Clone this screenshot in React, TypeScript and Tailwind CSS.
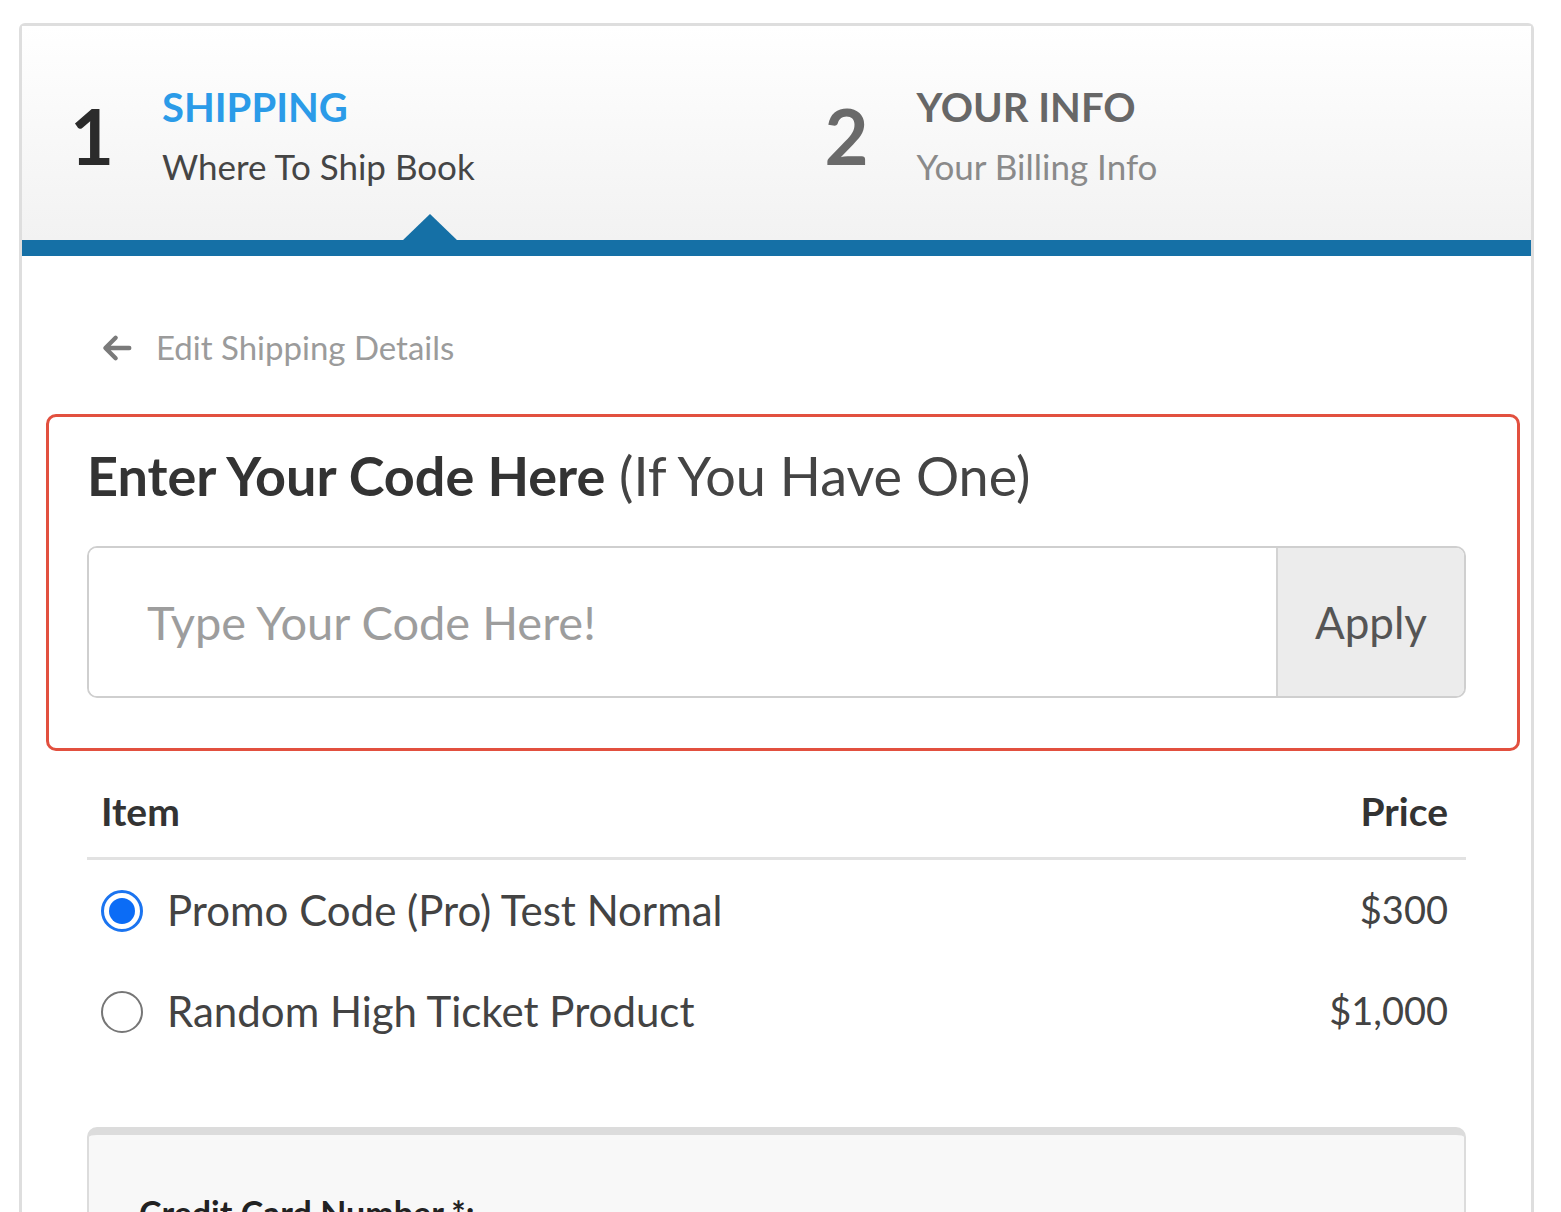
import React from "react";

const font = { fontFamily: "Lato, 'Open Sans', sans-serif" };

function Step({ n, title, sub, active }: { n: string; title: string; sub: string; active?: boolean }) {
  return (
    <div className="flex items-center pl-[48px] pt-[6px]">
      <div className={`w-[92px] text-[76px] font-bold leading-none ${active ? "text-[#2b2b2b]" : "text-[#6a6a6a]"}`}>{n}</div>
      <div className="flex flex-col">
        <span className={`text-[40px] font-bold leading-[56px] ${active ? "text-[#2b9be8]" : "text-[#676767]"}`}>{title}</span>
        <span className={`mt-[3px] text-[35px] leading-[56px] ${active ? "text-[#454545]" : "text-[#8a8a8a]"}`}>{sub}</span>
      </div>
    </div>
  );
}

function Radio({ checked }: { checked?: boolean }) {
  if (checked) {
    return (
      <span className="flex h-[42px] w-[42px] items-center justify-center rounded-full border-[3px] border-[#1b74f0] bg-white">
        <span className="h-[26px] w-[26px] rounded-full bg-[#0b6cf6]" />
      </span>
    );
  }
  return <span className="h-[42px] w-[42px] rounded-full border-2 border-[#767676] bg-white" />;
}

const items = [
  { name: "Promo Code (Pro) Test Normal", price: "$300", checked: true },
  { name: "Random High Ticket Product", price: "$1,000" },
];

export default function App() {
  return (
    <div className="h-[1212px] overflow-hidden bg-white pl-[19px] pr-[27px] pt-[23px]" style={font}>
      <div className="relative rounded-t-[6px] border-[3px] border-b-0 border-[#dedede] bg-white">
        <div className="grid h-[214px] grid-cols-2 bg-gradient-to-b from-[#ffffff] to-[#f2f2f2]">
          <Step n="1" title="SHIPPING" sub="Where To Ship Book" active />
          <Step n="2" title="YOUR INFO" sub="Your Billing Info" />
        </div>
        <div className="absolute left-[380px] top-[188px] h-0 w-0 border-x-[28px] border-b-[27px] border-x-transparent border-b-[#1570a6]" />
        <div className="h-[16px] bg-[#1570a6]" />

        <div className="px-[65px] pb-[40px]">
          <div className="flex h-[158px] items-center gap-[22px] pl-[13px] pt-[26px] text-[33px] text-[#9b9b9b]">
            <svg width="34" height="30" viewBox="0 0 24 22" fill="none" stroke="#7a7a7a" strokeWidth="3.2" strokeLinecap="round" strokeLinejoin="round">
              <path d="M21 11H4M11 3.5L3.5 11l7.5 7.5" />
            </svg>
            <span>Edit Shipping Details</span>
          </div>

          <div className="-ml-[41px] -mr-[54px] rounded-[10px] border-[3px] border-[#e2503f] pb-[50px] pl-[38px] pr-[51px] pt-[23px]">
            <h2 className="text-[54px] leading-[72px] text-[#333]">
              <span className="font-bold">Enter Your Code Here</span> <span className="text-[#444]">(If You Have One)</span>
            </h2>
            <div className="mt-[34px] flex h-[152px] overflow-hidden rounded-[10px] border-2 border-[#cfcfcf]">
              <div className="flex flex-1 items-center bg-white pl-[58px] text-[47px] text-[#9d9d9d]">Type Your Code Here!</div>
              <div className="flex w-[188px] items-center justify-center border-l-2 border-[#d3d3d3] bg-[#ececec] text-[44px] text-[#555]">Apply</div>
            </div>
          </div>

          <div className="mt-[29px] flex h-[80px] items-center justify-between border-b-[3px] border-[#e2e2e2] pb-[14px] pl-[14px] pr-[18px] text-[39px] font-bold text-[#333]">
            <span>Item</span>
            <span>Price</span>
          </div>
          {items.map((it) => (
            <div key={it.name} className="flex h-[101px] items-center justify-between pl-[14px] pr-[18px]">
              <div className="flex items-center gap-[24px]">
                <Radio checked={it.checked} />
                <span className="text-[42px] text-[#434343]">{it.name}</span>
              </div>
              <span className="self-start pt-[21px] text-[38px] text-[#434343]">{it.price}</span>
            </div>
          ))}

          <div className="mt-[65px] rounded-t-[10px] border-2 border-t-[8px] border-[#dcdcdc] bg-[#f8f8f8] px-[50px] pt-[52px]">
            <div className="text-[34px] font-bold text-[#222]">Credit Card Number *:</div>
            <div className="h-[120px]" />
          </div>
        </div>
      </div>
    </div>
  );
}
